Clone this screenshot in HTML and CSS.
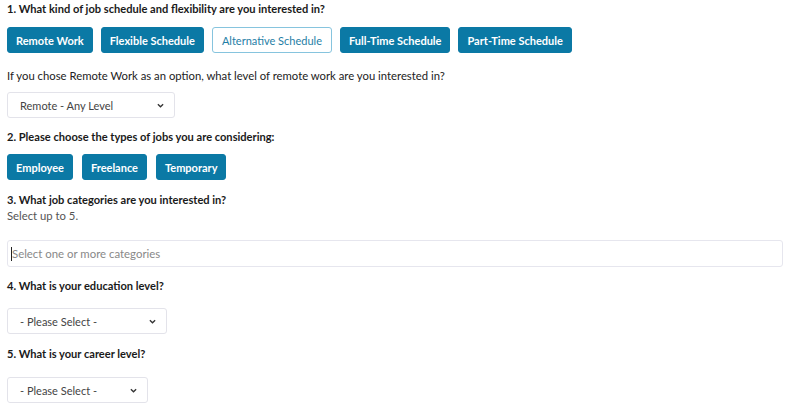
FILE: index.html
```html
<!DOCTYPE html>
<html>
<head>
<meta charset="utf-8">
<link rel="stylesheet" href="styles.css">
</head>
<body>
<form class="prefs">
  <section class="q q1">
    <h3 class="label">1. What kind of job schedule and flexibility are you interested in?</h3>
    <div class="btns">
      <button type="button" class="btn">Remote Work</button>
      <button type="button" class="btn">Flexible Schedule</button>
      <button type="button" class="btn btn-outline">Alternative Schedule</button>
      <button type="button" class="btn">Full-Time Schedule</button>
      <button type="button" class="btn">Part-Time Schedule</button>
    </div>
  </section>
  <section class="q q1b">
    <p class="text">If you chose Remote Work as an option, what level of remote work are you interested in?</p>
    <div class="select sel-remote"><span>Remote - Any Level</span><svg class="chev" viewBox="0 0 8 5" width="7" height="5"><path d="M1 1l3 3 3-3" fill="none" stroke="#333" stroke-width="1.5"/></svg></div>
  </section>
  <section class="q q2">
    <h3 class="label">2. Please choose the types of jobs you are considering:</h3>
    <div class="btns btns2">
      <button type="button" class="btn">Employee</button>
      <button type="button" class="btn">Freelance</button>
      <button type="button" class="btn">Temporary</button>
    </div>
  </section>
  <section class="q q3">
    <h3 class="label">3. What job categories are you interested in?</h3>
    <p class="hint">Select up to 5.</p>
    <div class="input"><span class="caret"></span><span class="ph">Select one or more categories</span></div>
  </section>
  <section class="q q4">
    <h3 class="label">4. What is your education level?</h3>
    <div class="select sel-edu"><span>- Please Select -</span><svg class="chev" viewBox="0 0 8 5" width="7" height="5"><path d="M1 1l3 3 3-3" fill="none" stroke="#333" stroke-width="1.5"/></svg></div>
  </section>
  <section class="q q5">
    <h3 class="label">5. What is your career level?</h3>
    <div class="select sel-career"><span>- Please Select -</span><svg class="chev" viewBox="0 0 8 5" width="7" height="5"><path d="M1 1l3 3 3-3" fill="none" stroke="#333" stroke-width="1.5"/></svg></div>
  </section>
</form>
</body>
</html>
```

FILE: styles.css
```css
* { box-sizing: border-box; }
body {
  margin: 0;
  background: #fff;
  font-family: "Lato", "Noto Sans", sans-serif;
  color: #222;
}
.prefs {
  padding: 1px 7px 0 7px;
  width: 790px;
}
.q { margin: 0; }
.label {
  margin: 0;
  font-size: 11.1px;
  font-weight: 700;
  color: #1a1a1a;
  line-height: 16px;
}
.text {
  margin: 0;
  font-size: 11.3px;
  line-height: 16px;
  color: #222;
}
.hint {
  margin: 0;
  font-size: 11.3px;
  line-height: 16px;
  color: #555;
}
.btns {
  display: flex;
  gap: 8px;
}
.btns2 { gap: 9px; }
.btn {
  height: 26px;
  padding: 0 8px;
  border: 1px solid #0b79a5;
  background: #0b79a5;
  color: #fff;
  font-family: inherit;
  font-size: 11px;
  font-weight: 700;
  border-radius: 3px;
}
.btn-outline {
  background: #fff;
  border-color: #86c4de;
  color: #1f7ea6;
  font-weight: 400;
  padding: 0 9px;
}
.select {
  display: flex;
  align-items: center;
  justify-content: space-between;
  height: 26px;
  border: 1px solid #e3e3ea;
  border-radius: 3px;
  padding: 0 10px 0 12px;
  font-size: 11px;
  color: #444;
}
.chev { display: block; }
.sel-remote { width: 168px; }
.sel-edu { width: 160px; }
.sel-career { width: 141px; }
.input {
  display: flex;
  align-items: center;
  height: 27px;
  width: 776px;
  border: 1px solid #e6e6ee;
  border-radius: 3px;
  padding-left: 3px;
  font-size: 11.4px;
  color: #888;
}
.caret {
  width: 1px;
  height: 14px;
  background: #222;
}
.q1 .btns { margin-top: 10px; }
.q1b { margin-top: 15px; }
.q1b .select { margin-top: 8px; }
.q2 { margin-top: 11px; }
.q2 .btns { margin-top: 9px; }
.q3 { margin-top: 12px; }
.q3 .input { margin-top: 16px; }
.q4 { margin-top: 11px; }
.q4 .select { margin-top: 14px; }
.q5 { margin-top: 12px; }
.q5 .select { margin-top: 15px; }
```
